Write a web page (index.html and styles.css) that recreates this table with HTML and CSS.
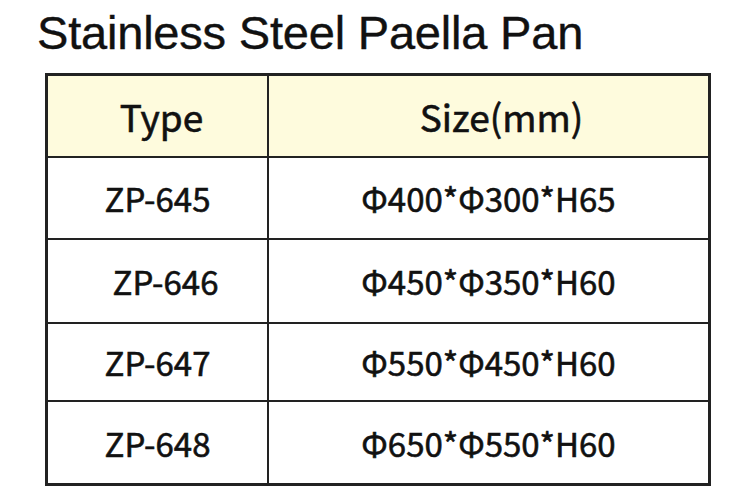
FILE: index.html
```html
<!DOCTYPE html>
<html>
<head>
<meta charset="utf-8">
<link rel="stylesheet" href="styles.css">
</head>
<body>
<div class="page">
  <h1 class="title">Stainless Steel Paella Pan</h1>
  <table class="spec">
    <tr class="head">
      <th class="c-type">Type</th>
      <th class="c-size">Size(mm)</th>
    </tr>
    <tr class="r1"><td>ZP-645</td><td>Φ400*Φ300*H65</td></tr>
    <tr class="r2"><td class="indent">ZP-646</td><td>Φ450*Φ350*H60</td></tr>
    <tr class="r3"><td>ZP-647</td><td>Φ550*Φ450*H60</td></tr>
    <tr class="r4"><td>ZP-648</td><td>Φ650*Φ550*H60</td></tr>
  </table>
</div>
</body>
</html>
```
FILE: styles.css
```css
html, body {
  margin: 0;
  padding: 0;
  background: #ffffff;
}
.page {
  width: 750px;
  height: 500px;
  padding-top: 5px;
  box-sizing: border-box;
}
.title {
  margin: 0 0 0 37px;
  font-family: "Liberation Sans", Arial, sans-serif;
  font-weight: normal;
  font-size: 47px;
  line-height: 56px;
  color: #111;
  letter-spacing: -0.2px;
  -webkit-text-stroke: 0.4px #111;
}
.spec {
  margin: 12px 0 0 45px;
  border-collapse: collapse;
  border: 3px solid #222;
  width: 666px;
  font-family: "Noto Sans CJK SC", "Noto Sans", sans-serif;
  color: #111;
}
.spec th, .spec td {
  border: 2px solid #222;
  text-align: center;
  vertical-align: middle;
  padding: 0;
  font-weight: normal;
  -webkit-text-stroke: 0.6px #111;
}
.c-type { width: 211px; }
.head th {
  background: #fefbdd;
  font-size: 37px;
  height: 80px;
}
.head .c-type { padding-left: 8px; }
.head .c-size { padding-left: 26px; }
.spec td {
  font-size: 33px;
  height: 80px;
}
.spec td.indent { padding-left: 16px; }
.r2 td { height: 82px; }
.r3 td { height: 76px; }
.r4 td { height: 81px; }
```
